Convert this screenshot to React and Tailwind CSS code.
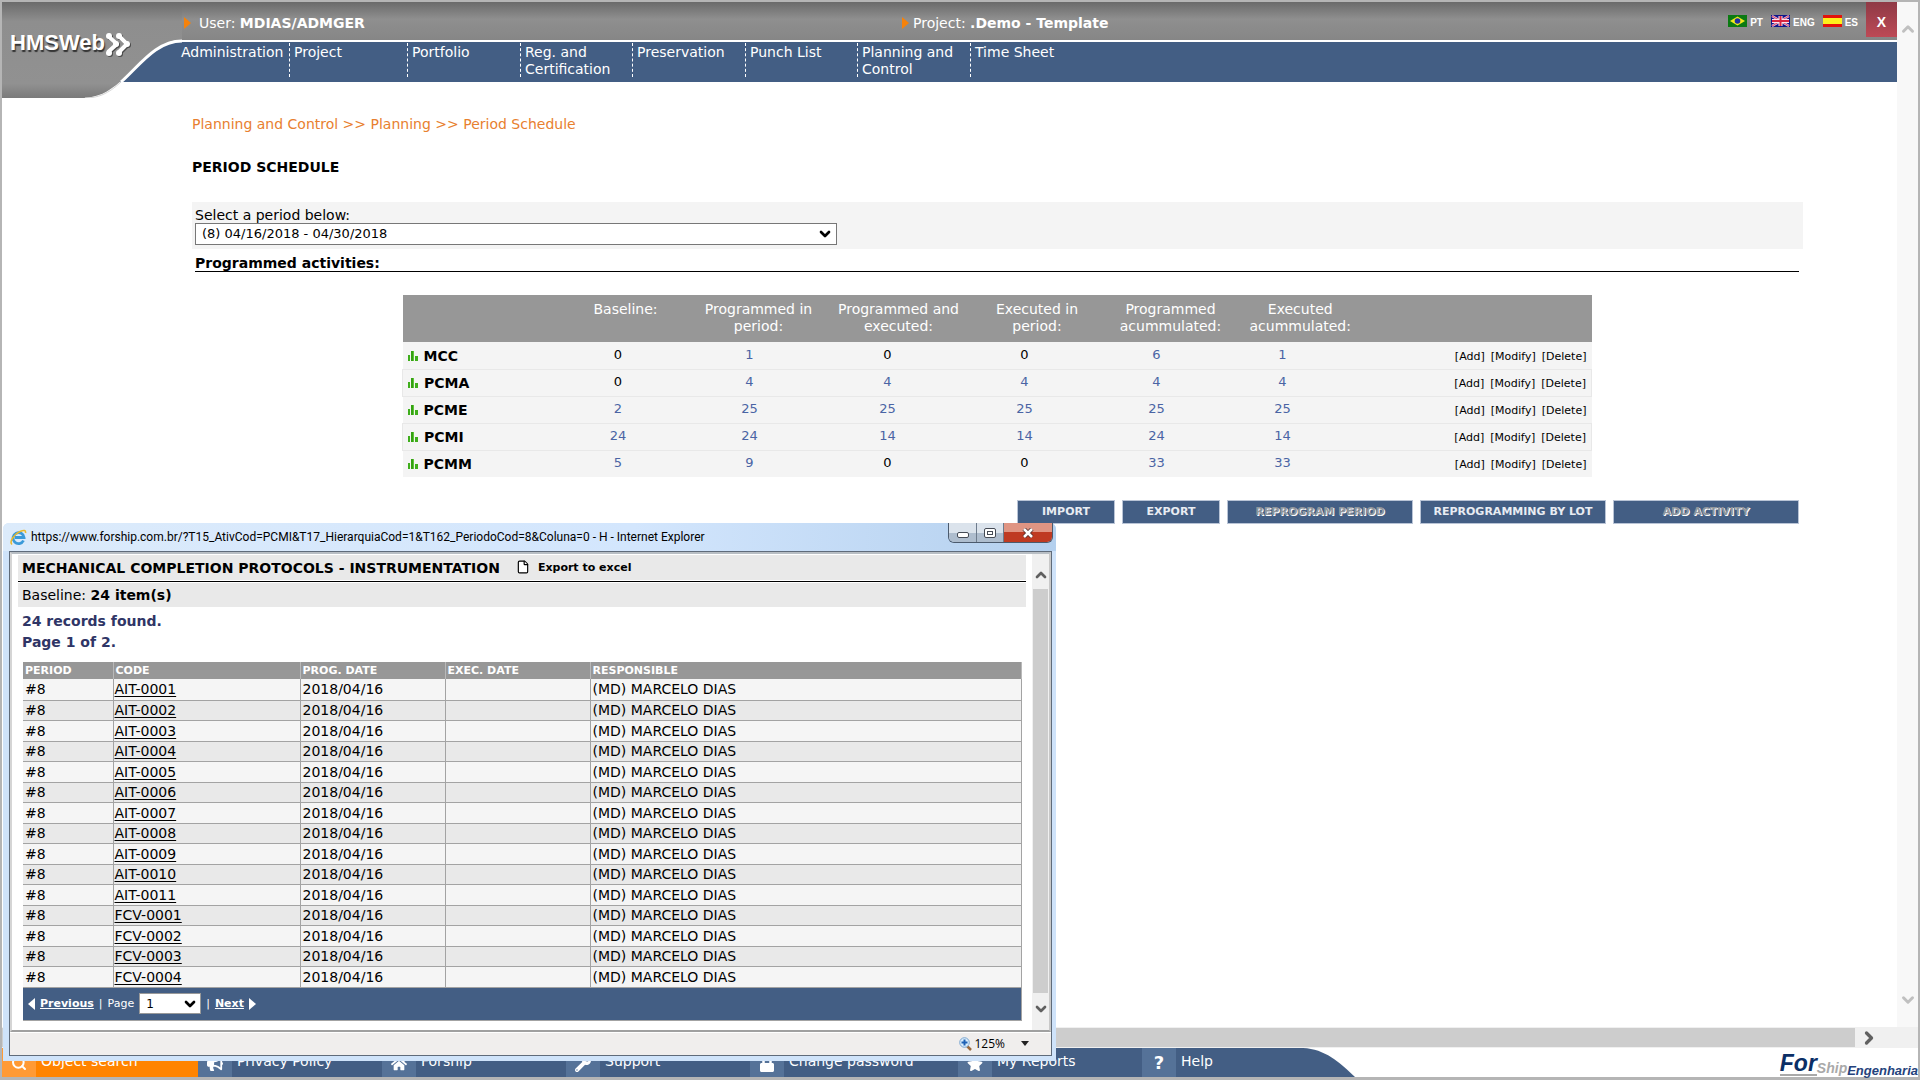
import { ChevronDown, ChevronRight, ChevronUp, File, Search } from 'lucide-react'
import { FaBullhorn, FaHome, FaLock, FaStar, FaWrench } from 'react-icons/fa'

const menu = [
  { label: 'Administration', box: 'w-[108px]' },
  { label: 'Project', box: 'w-[118px] border-l pl-1' },
  { label: 'Portfolio', box: 'w-[113px] border-l pl-1' },
  { label: 'Reg. and Certification', box: 'w-[112px] border-l pl-1' },
  { label: 'Preservation', box: 'w-[113px] border-l pl-1' },
  { label: 'Punch List', box: 'w-[112px] border-l pl-1' },
  { label: 'Planning and Control', box: 'w-[113px] border-l pl-1' },
  { label: 'Time Sheet', box: 'w-[112px] border-l pl-1' },
]

const activityColumns = [
  { lines: ['Baseline:'], pad: 'pl-[15px]' },
  { lines: ['Programmed in', 'period:'], pad: 'pl-[18px]' },
  { lines: ['Programmed and', 'executed:'], pad: 'pl-[22px]' },
  { lines: ['Executed in', 'period:'], pad: 'pl-[25px]' },
  { lines: ['Programmed', 'acummulated:'], pad: 'pl-[28px]' },
  { lines: ['Executed', 'acummulated:'], pad: 'pl-[25px]' },
]

const activities = [
  { code: 'MCC', values: [0, 1, 0, 0, 6, 1] },
  { code: 'PCMA', values: [0, 4, 4, 4, 4, 4] },
  { code: 'PCME', values: [2, 25, 25, 25, 25, 25] },
  { code: 'PCMI', values: [24, 24, 14, 14, 24, 14] },
  { code: 'PCMM', values: [5, 9, 0, 0, 33, 33] },
]

const actions = [
  { label: 'IMPORT', box: 'w-[98px]' },
  { label: 'EXPORT', box: 'w-[98px]' },
  { label: 'REPROGRAM PERIOD', box: 'w-[186px]', disabled: true },
  { label: 'REPROGRAMMING BY LOT', box: 'w-[186px]' },
  { label: 'ADD ACTIVITY', box: 'w-[186px]', disabled: true },
]

const protocols = [
  'AIT-0001', 'AIT-0002', 'AIT-0003', 'AIT-0004', 'AIT-0005',
  'AIT-0006', 'AIT-0007', 'AIT-0008', 'AIT-0009', 'AIT-0010',
  'AIT-0011', 'FCV-0001', 'FCV-0002', 'FCV-0003', 'FCV-0004',
]

const shortcuts = [
  { label: 'Privacy Policy', icon: FaBullhorn, box: 'w-[184px]' },
  { label: 'Forship', icon: FaHome, box: 'w-[184px]' },
  { label: 'Support', icon: FaWrench, box: 'w-[184px]' },
  { label: 'Change password', icon: FaLock, box: 'w-[208px]' },
  { label: 'My Reports', icon: FaStar, box: 'w-[184px]' },
]

function BrazilFlag() {
  return (
    <svg width="19" height="12" viewBox="0 0 19 12" aria-hidden="true">
      <rect width="19" height="12" fill="#0b7a12" />
      <path d="M9.500 1.500 17 6 9.500 10.500 2 6Z" fill="#f3ea1b" />
      <circle cx="9.500" cy="6" r="2.800" fill="#1e2fa0" />
    </svg>
  )
}

function BritishFlag() {
  return (
    <svg width="19" height="12" viewBox="0 0 19 12" aria-hidden="true">
      <rect width="19" height="12" fill="#11158a" />
      <path d="M1 1 18 11M18 1 1 11" stroke="#e9b9d0" strokeWidth="2.400" />
      <path d="M1 1 18 11M18 1 1 11" stroke="#d8305a" strokeWidth="0.800" />
      <path d="M9.500 1V11M1 6H18" stroke="#fbe3ee" strokeWidth="4" />
      <path d="M9.500 1V11M1 6H18" stroke="#d92340" strokeWidth="2" />
    </svg>
  )
}

function SpanishFlag() {
  return (
    <svg width="19" height="12" viewBox="0 0 19 12" aria-hidden="true">
      <rect width="19" height="12" fill="#e3120b" />
      <rect y="3" width="19" height="6" fill="#fdf01d" />
    </svg>
  )
}

const languages = [
  { code: 'PT', Flag: BrazilFlag },
  { code: 'ENG', Flag: BritishFlag },
  { code: 'ES', Flag: SpanishFlag },
]

function OrangeArrow() {
  return (
    <svg width="7" height="12" viewBox="0 0 7 12" aria-hidden="true">
      <path d="M0 0 7 6 0 12Z" fill="#f5820b" />
    </svg>
  )
}

function BarsIcon() {
  return (
    <svg width="10" height="10" viewBox="0 0 10 10" aria-hidden="true">
      <path d="M0 4h2v6H0z" fill="#3fae1c" />
      <path d="M3 0h3v10H3z" fill="#5ec53a" />
      <path d="M3 0h2v10H3z" fill="#35a012" />
      <path d="M7 5h3v5H7z" fill="#3fae1c" />
    </svg>
  )
}

function BrandChevrons({ color }) {
  return (
    <g fill={color} stroke={color} strokeWidth="4">
      <path d="M106 34 115 42 106 50M117 34 125 42 117 50" fill="none" strokeLinejoin="round" />
      <g stroke="none">
        <circle cx="107" cy="34" r="3" />
        <circle cx="107" cy="51" r="3" />
        <circle cx="114" cy="42" r="3" />
        <circle cx="117" cy="34" r="3" />
        <circle cx="117" cy="51" r="3" />
        <circle cx="125" cy="42" r="3" />
      </g>
    </g>
  )
}

function Brand() {
  return (
    <div className="absolute left-0 top-0 h-[96px] w-[180px]">
      <svg className="absolute inset-0" width="180" height="96" viewBox="0 0 180 96" aria-hidden="true">
        <defs>
          <linearGradient id="brandGray" x1="0" y1="0" x2="0" y2="1">
            <stop offset="0" stopColor="#6b6b6b" />
            <stop offset="0.200" stopColor="#8e8e8e" />
            <stop offset="0.850" stopColor="#919191" />
            <stop offset="1" stopColor="#7a7a7a" />
          </linearGradient>
        </defs>
        <path d="M0 80H119V96H0Z" fill="#fff" />
        <path d="M0 0H180V38C154 38 137 62 119 79C105 91 96 95 82 96H0Z" fill="url(#brandGray)" />
        <path d="M180 39C154 39 138 63 119 80" fill="none" stroke="#fff" strokeWidth="3" />
        <path d="M119 80C106 92 96 96 83 96" fill="none" stroke="#d5d5d5" strokeWidth="1" />
        <g transform="translate(1 1)">
          <BrandChevrons color="#4b4b4b" />
        </g>
        <BrandChevrons color="#fff" />
      </svg>
      <span className="relative block pl-2 pt-[26px] font-['Liberation_Sans_Narrow','Liberation_Sans'] text-[22px] font-bold leading-[30px] text-white [text-shadow:1px_2px_1px_#333]">
        HMSWeb
      </span>
    </div>
  )
}

function Header() {
  return (
    <header className="relative text-white">
      <div className="flex h-[38px] items-start bg-linear-to-b from-[#6a6a6a] via-[#8f8f8f] via-45% to-[#868686] pl-[182px]">
        <div className="flex h-full w-[718px] items-center gap-2 pt-1">
          <OrangeArrow />
          <span>User: <b>MDIAS/ADMGER</b></span>
        </div>
        <div className="flex h-full items-center gap-1 pt-1">
          <OrangeArrow />
          <span>Project: <b>.Demo - Template</b></span>
        </div>
        <div className="ml-auto flex h-full items-center gap-2 pr-2">
          {languages.map(({ code, Flag }) => (
            <a key={code} href="#" className="flex items-center gap-[3px]">
              <Flag />
              <span className="pt-1 font-['Liberation_Sans'] text-[10px] font-bold leading-3">{code}</span>
            </a>
          ))}
        </div>
        <button type="button" className="h-[35px] w-[31px] bg-linear-to-b from-[#8f3a46] to-[#bd4a56] pt-1 font-['Liberation_Sans'] text-sm font-bold">
          X
        </button>
      </div>
      <nav className="flex h-[42px] border-t-2 border-white bg-[#435e84] pl-[179px] pt-px">
        {menu.map((item) => (
          <a key={item.label} href="#" className={`h-[34px] border-dashed border-white pt-px leading-[17px] ${item.box}`}>
            {item.label}
          </a>
        ))}
      </nav>
      <Brand />
    </header>
  )
}

function ActivityTable() {
  return (
    <table className="mx-auto mt-[23px] w-full max-w-[1190px] table-fixed border-collapse">
      <colgroup>
        <col className="w-[149px]" />
        <col className="w-[133px]" />
        <col className="w-[130px]" />
        <col className="w-[146px]" />
        <col className="w-[128px]" />
        <col className="w-[136px]" />
        <col className="w-[116px]" />
        <col />
      </colgroup>
      <thead>
        <tr className="h-[47px] bg-[#979797] align-top leading-[17px] text-white">
          <th />
          {activityColumns.map((col) => (
            <th key={col.lines.join(' ')} className={`whitespace-nowrap pt-[6px] font-normal ${col.pad}`}>
              <div className="inline-block">
                {col.lines.map((line) => <div key={line}>{line}</div>)}
              </div>
            </th>
          ))}
          <th />
        </tr>
      </thead>
      <tbody>
        {activities.map((row) => (
          <tr key={row.code} className="h-[27px] border-[#e8e8e8] bg-[#f4f4f4] even:border">
            <th scope="row" className="pl-[5px] pt-px text-left">
              <span className="flex items-center gap-[6px]">
                <BarsIcon />
                {row.code}
              </span>
            </th>
            {row.values.map((value, i) => (
              <td key={i} className="text-center text-[13px]">
                {value ? <a href="#" className="text-[#4a64a4]">{value}</a> : value}
              </td>
            ))}
            <td className="pr-[5px] pt-[3px] text-right text-[11px]">
              <span className="inline-flex gap-[6px]">
                <a href="#">[Add]</a>
                <a href="#">[Modify]</a>
                <a href="#">[Delete]</a>
              </span>
            </td>
          </tr>
        ))}
      </tbody>
    </table>
  )
}

function Schedule() {
  return (
    <main className="flex-1 pl-[190px] pr-[94px] pt-[34px]">
      <p className="leading-4 text-[#e8802f]">
        <a href="#">Planning and Control</a> &gt;&gt; <a href="#">Planning</a> &gt;&gt; <a href="#">Period Schedule</a>
      </p>
      <h1 className="mt-[27px] font-bold leading-4">PERIOD SCHEDULE</h1>
      <div className="mt-[27px] h-[47px] bg-[#f4f4f4] pl-[3px] pt-[5px]">
        <label htmlFor="period" className="block leading-4">Select a period below:</label>
        <div className="relative w-[642px]">
          <select id="period" className="h-[22px] w-full appearance-none border border-[#777] bg-white pl-[6px] text-[13px]">
            <option>(8) 04/16/2018 - 04/30/2018</option>
          </select>
          <ChevronDown className="pointer-events-none absolute right-1 top-[3px] size-4" strokeWidth={4} />
        </div>
      </div>
      <div className="ml-[3px] mr-1">
        <h2 className="border-b border-black pt-[6px] font-bold leading-4">Programmed activities:</h2>
        <ActivityTable />
        <div className="mt-[23px] flex justify-end gap-[7px]">
          {actions.map((action) => (
            <button
              key={action.label}
              type="button"
              disabled={action.disabled}
              className={`h-6 whitespace-nowrap border border-[#b9c4d6] bg-[#435e84] text-[11px] font-bold text-[#e8ecf2] disabled:text-[#8f959c] disabled:[text-shadow:1px_1px_0_#fff] ${action.box}`}
            >
              {action.label}
            </button>
          ))}
        </div>
      </div>
    </main>
  )
}

function ExplorerIcon() {
  return (
    <svg width="17" height="17" viewBox="0 0 17 17" aria-hidden="true">
      <path d="M13.500 11.500A5.500 5.500 0 1 1 14 8.500H5" fill="none" stroke="#3a9ad9" strokeWidth="2.800" />
      <path d="M2 15.500C-1 13 4 5 10 2.500C14 .8 16 1 15.500 4" fill="none" stroke="#e8b92e" strokeWidth="1.600" />
    </svg>
  )
}

function WindowControls() {
  return (
    <div className="mr-[3px] flex h-5 overflow-hidden rounded-b-md border border-t-0 border-[#4b5a6d]">
      <button type="button" aria-label="Minimize" className="grid w-7 place-items-center border-r border-[#6d7b8c] bg-linear-to-b from-[#dbe3ec] from-50% to-[#aebdce] to-50%">
        <span className="mt-1 h-[6px] w-3 rounded-xs border border-[#454b55] bg-white" />
      </button>
      <button type="button" aria-label="Maximize" className="grid w-[27px] place-items-center border-r border-[#6d7b8c] bg-linear-to-b from-[#dbe3ec] from-50% to-[#aebdce] to-50%">
        <span className="grid h-[10px] w-3 place-items-center rounded-xs border border-[#454b55] bg-white">
          <span className="h-1 w-[6px] border border-[#454b55]" />
        </span>
      </button>
      <button type="button" aria-label="Close" className="grid w-12 place-items-center bg-linear-to-b from-[#e09583] from-45% to-[#bf3a22] to-45%">
        <svg width="12" height="10" viewBox="0 0 12 10" aria-hidden="true">
          <path d="M2 1 10 9M10 1 2 9" stroke="#4f2a28" strokeWidth="4.200" />
          <path d="M2 1 10 9M10 1 2 9" stroke="#fff" strokeWidth="2.600" />
        </svg>
      </button>
    </div>
  )
}

function ProtocolTable() {
  return (
    <table className="w-full table-fixed border-collapse text-left">
      <colgroup>
        <col className="w-[90px]" />
        <col className="w-[187px]" />
        <col className="w-[145px]" />
        <col className="w-[145px]" />
        <col />
      </colgroup>
      <thead>
        <tr className="h-[17px] bg-[#979797] text-[11px] leading-4 text-white">
          {['PERIOD', 'CODE', 'PROG. DATE', 'EXEC. DATE', 'RESPONSIBLE'].map((name) => (
            <th key={name} className="border-r border-[#b9b9b9] pl-[2px]">{name}</th>
          ))}
        </tr>
      </thead>
      <tbody>
        {protocols.map((code) => (
          <tr key={code} className="h-5 bg-[#e9e9e9] leading-[18px] odd:h-[21px] odd:bg-[#f5f5f5] *:border-b *:border-r *:border-[#a3a3a3]">
            <td className="pl-[2px]">#8</td>
            <td className="pl-px">
              <a href="#" className="underline underline-offset-2">{code}</a>
            </td>
            <td className="pl-[2px]">2018/04/16</td>
            <td />
            <td className="pl-[2px]">(MD) MARCELO DIAS</td>
          </tr>
        ))}
      </tbody>
    </table>
  )
}

function Pager() {
  return (
    <div className="flex h-[33px] items-center gap-[5px] border-b border-r border-[#a3a3a3] bg-[#435e84] pl-[5px] text-[11px] text-white">
      <svg width="7" height="12" viewBox="0 0 7 12" aria-hidden="true"><path d="M7 0 0 6 7 12Z" fill="#fff" /></svg>
      <a href="#" className="font-bold underline">Previous</a>
      <span>|</span>
      <label htmlFor="page">Page</label>
      <div className="relative">
        <select id="page" className="block h-[21px] w-[62px] appearance-none border border-[#999] bg-white pl-[6px] text-xs text-black">
          <option>1</option>
        </select>
        <ChevronDown className="pointer-events-none absolute right-[3px] top-[3px] size-4 text-black" strokeWidth={4} />
      </div>
      <span>|</span>
      <a href="#" className="font-bold underline">Next</a>
      <svg width="7" height="12" viewBox="0 0 7 12" aria-hidden="true"><path d="M0 0 7 6 0 12Z" fill="#fff" /></svg>
    </div>
  )
}

function PopupWindow() {
  return (
    <section className="absolute left-px top-[521px] w-[1053px] rounded-t-md bg-[#cfe3fa] pb-[5px] pl-[6px] pr-1">
      <div className="-ml-[6px] -mr-1 flex h-7 items-start rounded-t-md bg-linear-to-r from-[#dcebfb] via-[#d3e6fd] via-60% to-[#b4d0ee] pl-[7px]">
        <div className="flex flex-1 items-center gap-1 pt-1">
          <ExplorerIcon />
          <span className="whitespace-nowrap font-['Roboto'] text-xs leading-5">
            https://www.forship.com.br/?T15_AtivCod=PCMI&amp;T17_HierarquiaCod=1&amp;T162_PeriodoCod=8&amp;Coluna=0 - H - Internet Explorer
          </span>
        </div>
        <WindowControls />
      </div>
      <div className="border border-[#5f6b7a] bg-white">
        <div className="flex border-2 border-t-[#b8bec4] border-b-[#a0a0a0] border-l-[#d5d5d5] border-r-[#c8c8c8]">
          <div className="min-w-0 flex-1 pl-[6px] pr-[6px] pt-px">
            <div className="flex h-[25px] items-center bg-[#e9e9e9] pl-1 font-bold">
              <h2>MECHANICAL COMPLETION PROTOCOLS - INSTRUMENTATION</h2>
              <a href="#" className="ml-4 flex items-center gap-2 text-[11px]">
                <File className="size-[14px] fill-white" />
                Export to excel
              </a>
            </div>
            <div className="mb-px mt-px h-px bg-black" />
            <p className="bg-[#e9e9e9] pl-1 leading-6">Baseline: <b>24 item(s)</b></p>
            <div className="pl-1 pt-1 font-bold leading-[21px] text-[#2f3566]">
              <p>24 records found.</p>
              <p>Page 1 of 2.</p>
            </div>
            <div className="mb-[9px] ml-[5px] mr-1 mt-[9px]">
              <ProtocolTable />
              <Pager />
            </div>
          </div>
          <div className="flex w-[17px] flex-col items-center bg-[#f0f0f0] text-[#606060]">
            <ChevronUp className="mb-[6px] mt-[13px] size-4" strokeWidth={4} />
            <div className="w-[15px] flex-1 bg-[#cdcdcd]" />
            <ChevronDown className="mb-[13px] mt-2 size-4" strokeWidth={4} />
          </div>
        </div>
        <div className="flex h-[23px] items-center justify-end border-t border-white bg-[#f0eeed] pr-[22px] font-['Open_Sans'] text-xs">
          <svg width="13" height="14" viewBox="0 0 13 14" aria-hidden="true">
            <path d="M8 9 12 13" stroke="#9a6a3c" strokeWidth="2.500" />
            <circle cx="5.500" cy="5.500" r="4.800" fill="#d8ecfb" stroke="#7da6cf" />
            <path d="M5.500 2.500V8.500M2.500 5.500H8.500" stroke="#1f62b5" strokeWidth="2" />
          </svg>
          <span className="ml-[2px] mr-4">125%</span>
          <svg width="8" height="5" viewBox="0 0 8 5" aria-hidden="true"><path d="M0 0H8L4 5Z" fill="#222" /></svg>
        </div>
      </div>
    </section>
  )
}

function Footer() {
  return (
    <footer className="flex h-[29px] items-stretch bg-white leading-[27px] text-white">
      <a href="#" className="flex w-[196px] gap-[5px] bg-[#ff8400]">
        <span className="grid h-full w-[34px] place-items-center bg-[#ff9a35]"><Search className="size-4" strokeWidth={3} /></span>
        Object search
      </a>
      {shortcuts.map(({ label, icon: Icon, box }) => (
        <a key={label} href="#" className={`flex gap-[5px] whitespace-nowrap bg-[#435e84] ${box}`}>
          <span className="grid h-full w-[34px] place-items-center bg-[#557298] pt-[3px]"><Icon className="size-4" /></span>
          {label}
        </a>
      ))}
      <a href="#" className="flex w-[161px] gap-[5px] bg-[#435e84]">
        <span className="grid h-full w-[34px] place-items-center bg-[#557298] text-lg font-bold leading-5">?</span>
        Help
      </a>
      <svg width="52" height="29" viewBox="0 0 52 29" aria-hidden="true">
        <path d="M0 0C22 1 36 14 52 29H0Z" fill="#435e84" />
      </svg>
      <div className="ml-auto flex items-end font-['Liberation_Sans'] font-bold italic leading-none">
        <span className="mb-px border-b-2 border-[#a9a9a9] text-[23px] leading-[22px] text-[#0b2f66]">For</span>
        <span className="text-sm leading-[18px] text-[#a9a9a9]">Ship</span>
        <span className="text-[13px] leading-[12px] text-[#24427c]">Engenharia</span>
      </div>
    </footer>
  )
}

export default function App() {
  return (
    <div className="relative flex min-h-screen flex-col border-2 border-b-[3px] border-[#b5b5b5] bg-white font-['DejaVu_Sans',sans-serif] text-sm text-black">
      <div className="flex flex-1">
        <div className="flex min-w-0 flex-1 flex-col">
          <Header />
          <Schedule />
        </div>
        <div className="flex w-[21px] flex-col items-center justify-between bg-[#f8f8f8] pb-[18px] pt-[18px] text-[#c0c0c0]">
          <ChevronUp className="size-[18px]" strokeWidth={4} />
          <ChevronDown className="size-[18px]" strokeWidth={4} />
        </div>
      </div>
      <div className="flex h-[21px] items-center bg-[#f0f0f0] py-px pr-[63px]">
        <div className="h-full flex-1 bg-[#cdcdcd]" />
        <ChevronRight className="-mr-6 ml-1 size-5 text-[#606060]" strokeWidth={4} />
      </div>
      <Footer />
      <PopupWindow />
    </div>
  )
}
